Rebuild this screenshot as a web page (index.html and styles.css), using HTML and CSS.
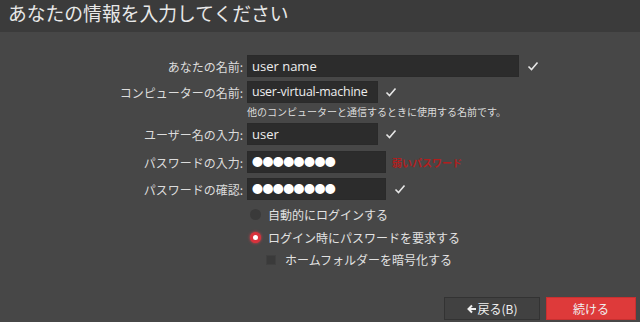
FILE: index.html
```html
<!DOCTYPE html>
<html lang="ja">
<head>
    <meta charset="UTF-8">
    <title>あなたの情報を入力してください</title>
    <link rel="stylesheet" href="styles.css">
</head>
<body>
    <header class="title-bar">
        <h1>あなたの情報を入力してください</h1>
    </header>
    <main class="form">
        <div class="row row-name">
            <label class="label">あなたの名前:</label>
            <div class="field wide">user name</div>
            <svg class="check" viewBox="0 0 12 10"><polyline points="1.5,5.5 4.5,8.5 10.5,1.5"/></svg>
        </div>
        <div class="row row-host">
            <label class="label">コンピューターの名前:</label>
            <div class="field mid">user-virtual-machine</div>
            <svg class="check" viewBox="0 0 12 10"><polyline points="1.5,5.5 4.5,8.5 10.5,1.5"/></svg>
        </div>
        <p class="hint">他のコンピューターと通信するときに使用する名前です。</p>
        <div class="row row-user">
            <label class="label">ユーザー名の入力:</label>
            <div class="field short">user</div>
            <svg class="check" viewBox="0 0 12 10"><polyline points="1.5,5.5 4.5,8.5 10.5,1.5"/></svg>
        </div>
        <div class="row row-pass">
            <label class="label">パスワードの入力:</label>
            <div class="field pass">●●●●●●●●</div>
            <span class="weak">弱いパスワード</span>
        </div>
        <div class="row row-confirm">
            <label class="label">パスワードの確認:</label>
            <div class="field pass">●●●●●●●●</div>
            <svg class="check" viewBox="0 0 12 10"><polyline points="1.5,5.5 4.5,8.5 10.5,1.5"/></svg>
        </div>
        <div class="options">
            <div class="option"><span class="radio"></span>自動的にログインする</div>
            <div class="option"><span class="radio on"></span>ログイン時にパスワードを要求する</div>
            <div class="option sub"><span class="box"></span>ホームフォルダーを暗号化する</div>
        </div>
    </main>
    <footer class="buttons">
        <button class="btn back"><svg class="arrow" viewBox="0 0 10 10"><path d="M5 1.5 L1.5 5 L5 8.5 M1.5 5 H9"/></svg>戻る(B)</button>
        <button class="btn next">続ける</button>
    </footer>
</body>
</html>
```

FILE: styles.css
```css
* {
    margin: 0;
    padding: 0;
    box-sizing: border-box;
}
body {
    font-family: "Noto Sans CJK JP", "Open Sans", sans-serif;
    color: #e6e6e6;
    background-color: #474747;
    width: 640px;
    height: 322px;
    overflow: hidden;
}
.title-bar {
    height: 32px;
    background-color: #3b3b3b;
    padding-left: 8px;
}
.title-bar h1 {
    font-size: 18.8px;
    font-weight: 400;
    line-height: 26px;
    color: #e8e8e8;
}
.form {
    padding-top: 23px;
    display: flex;
    flex-direction: column;
}
.row {
    display: flex;
    align-items: center;
    height: 22px;
}
.label {
    flex: none;
    width: 247px;
    text-align: right;
    padding-right: 4px;
    font-size: 12px;
    color: #dcdcdc;
}
.field {
    flex: none;
    height: 22px;
    background-color: #2c2c2c;
    border: 1px solid #2a2a2a;
    font-family: "Open Sans", "Noto Sans CJK JP", sans-serif;
    font-size: 13px;
    line-height: 20px;
    padding-left: 4px;
    color: #eeeeee;
    white-space: nowrap;
    overflow: hidden;
}
.wide { width: 272px; }
.short { width: 131px; }
.mid {
    width: 131px;
    font-size: 12.4px;
    letter-spacing: -0.2px;
}
.pass {
    width: 139px;
    font-size: 11px;
    letter-spacing: -0.6px;
    color: #ffffff;
}
.check {
    flex: none;
    width: 12px;
    height: 10px;
    margin-left: 7px;
    fill: none;
    stroke: #e6e6e6;
    stroke-width: 1.6;
}
.row-host { margin-top: 4px; }
.row-user { margin-top: 3px; }
.row-pass { margin-top: 6px; }
.row-confirm { margin-top: 5px; }
.row-name .check { margin-left: 8px; }
.row-confirm .check { margin-left: 8px; }
.hint {
    padding-left: 247px;
    font-size: 10px;
    line-height: 16px;
    color: #dcdcdc;
    margin-top: 1px;
}
.weak {
    margin-left: 6px;
    font-size: 10px;
    font-weight: 700;
    color: #b01e1e;
}
.options {
    padding-left: 250px;
    margin-top: 3px;
    display: flex;
    flex-direction: column;
}
.option {
    display: flex;
    align-items: center;
    height: 23px;
    font-size: 12px;
    color: #e2e2e2;
}
.option.sub {
    padding-left: 16px;
    height: 21px;
}
.radio {
    width: 11px;
    height: 11px;
    border-radius: 50%;
    background-color: #3a3a3a;
    margin-right: 7px;
}
.radio.on {
    background-color: #ffffff;
    border: 3px solid #d8323c;
    box-shadow: 0 0 3px #e0404a;
}
.box {
    width: 10px;
    height: 10px;
    background-color: #3a3a3a;
    border: 1px solid #404040;
    margin-right: 9px;
}
.buttons {
    display: flex;
    justify-content: flex-end;
    gap: 6px;
    padding-right: 4px;
    margin-top: 27px;
}
.btn {
    height: 23px;
    display: flex;
    align-items: center;
    justify-content: center;
    font-family: "Noto Sans CJK JP", sans-serif;
    font-size: 12px;
    color: #f0f0f0;
    border: 1px solid #333333;
}
.arrow {
    width: 10px;
    height: 10px;
    fill: none;
    stroke: #f0f0f0;
    stroke-width: 2;
    margin-right: 1px;
}
.back {
    width: 96px;
    background-color: #414141;
}
.next {
    width: 90px;
    background-color: #de3a3a;
    border-color: #c83030;
}
```
